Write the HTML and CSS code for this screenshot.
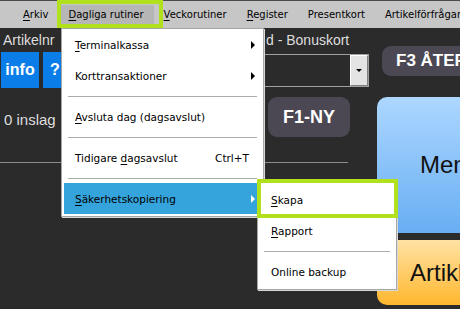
FILE: index.html
```html
<!DOCTYPE html>
<html lang="sv">
<head>
<meta charset="utf-8">
<title>Kassa</title>
<link rel="stylesheet" href="styles.css">
</head>
<body>
<nav class="menubar">
  <span class="mi"><u>A</u>rkiv</span>
  <span class="mi open"><u>D</u>agliga rutiner</span>
  <span class="mi"><u>V</u>eckorutiner</span>
  <span class="mi"><u>R</u>egister</span>
  <span class="mi">Presentkort</span>
  <span class="mi">Artikelförfrågan</span>
</nav>

<main class="main">
  <section class="left">
    <div class="title">Artikelnr</div>
    <div class="title title-b">d - Bonuskort</div>

    <div class="btns">
      <div class="btn-blue info">info</div>
      <div class="btn-blue q">?</div>
    </div>
    <div class="combo"><div class="combo-btn"><span class="tri"></span></div></div>

    <div class="count">0 inslag</div>
    <div class="fcell"><div class="fbtn f1">F1-NY</div></div>

    <div class="rule"></div>
  </section>

  <section class="right">
    <div class="fbtn f3">F3 ÅTERKÖP</div>
    <div class="big big-blue">Meny</div>
    <div class="big big-orange">Artiklar</div>
  </section>
</main>

<div class="dropdown">
  <div class="item"><span class="label"><u>T</u>erminalkassa</span><span class="arrow"></span></div>
  <div class="item"><span class="label">Korttransaktioner</span><span class="arrow"></span></div>
  <div class="sep"></div>
  <div class="item"><span class="label"><u>A</u>vsluta dag (dagsavslut)</span></div>
  <div class="sep"></div>
  <div class="item"><span class="label">Tidigare <u>d</u>agsavslut</span><span class="shortcut">Ctrl+T</span></div>
  <div class="sep"></div>
  <div class="item active"><span class="label"><u>S</u>äkerhetskopiering</span><span class="arrow"></span></div>
</div>

<div class="submenu">
  <div class="item"><span class="label"><u>S</u>kapa</span></div>
  <div class="item"><span class="label"><u>R</u>apport</span></div>
  <div class="sep"></div>
  <div class="item"><span class="label">Online backup</span></div>
</div>

<div class="mark mark-menu"></div>
<div class="mark mark-sub"></div>
</body>
</html>
```

FILE: styles.css
```css
* { box-sizing: border-box; margin: 0; padding: 0; }
html, body { width: 460px; height: 309px; overflow: hidden; }
body {
  background: #2b2b2b;
  font-family: "DejaVu Sans", sans-serif;
  position: relative;
}
u { text-decoration: underline; text-underline-offset: 2px; text-decoration-thickness: 1px; }

/* menu bar */
.menubar {
  height: 28px;
  background: #c6c6c6;
  border-top: 1px solid #4a4a4a;
  display: flex;
  align-items: center;
  padding-left: 13px;
  font-size: 10px;
  color: #000;
  white-space: nowrap;
}
.mi { padding: 4px 10px; }
.mi.open { background: #b6b6b6; }

/* application background */
.main { display: flex; gap: 7px; }
.left {
  width: 370px;
  flex-shrink: 0;
  display: grid;
  grid-template-columns: 263px 107px;
  grid-template-rows: 24px 36px 74px 1px;
}
.title {
  color: #dedede;
  font-family: "Liberation Sans", sans-serif;
  font-size: 14px;
  display: flex;
  align-items: center;
  padding-left: 3px;
}
.btns { display: flex; gap: 4px; padding-left: 1px; }
.btn-blue {
  background: #0b7de8;
  color: #fff;
  font: bold 16px "Liberation Sans", sans-serif;
  height: 36px;
  display: flex;
  align-items: center;
  justify-content: center;
}
.info { width: 38px; }
.q { width: 24px; }
.combo {
  margin-top: 2px;
  height: 33px;
  width: 106px;
  border: 1px solid #a0a0a0;
  display: flex;
  justify-content: flex-end;
}
.combo-btn {
  width: 18px;
  background: #e4e4e4;
  border: 1px solid;
  border-color: #fff #808080 #808080 #fff;
  display: flex;
  align-items: center;
  justify-content: center;
}
.tri {
  width: 0; height: 0;
  border-top: 3px solid #000;
  border-left: 3px solid transparent;
  border-right: 3px solid transparent;
}
.count {
  color: #dedede;
  font-family: "Liberation Sans", sans-serif;
  font-size: 15px;
  padding: 23px 0 0 4px;
}
.fcell { padding: 9px 0 0 5px; }
.fbtn {
  background: #4b4853;
  color: #fff;
  font: bold 18px "Liberation Sans", sans-serif;
  border-radius: 9px;
  display: flex;
  align-items: center;
  white-space: nowrap;
}
.f1 { width: 82px; height: 40px; justify-content: center; }
.rule { grid-column: 1 / -1; width: 348px; height: 1px; background: #8c8c8c; }

.right { width: 160px; flex-shrink: 0; display: flex; flex-direction: column; }
.f3 { margin: 18px 0 0 5px; height: 30px; padding-left: 14px; font-size: 17px; }
.big {
  display: flex;
  align-items: center;
  font-family: "Liberation Sans", sans-serif;
  font-size: 24px;
  color: #111;
  white-space: nowrap;
}
.big-blue {
  margin-top: 21px;
  height: 136px;
  border-radius: 10px 0 0 0;
  background: linear-gradient(#acd7ff, #68aef3);
  padding-left: 43px;
}
.big-orange {
  margin-top: 7px;
  height: 65px;
  border-radius: 0 0 0 10px;
  background: linear-gradient(#ffe2a4, #ffb72e);
  padding-left: 33px;
}

/* menus */
.dropdown, .submenu {
  position: absolute;
  background: #fff;
  border: 1px solid #a6a6a6;
  font-size: 10.5px;
  color: #000;
  white-space: nowrap;
  box-shadow: 1px 1px 0 #d8d8d8;
}
.dropdown { left: 61px; top: 28px; width: 203px; padding: 0 2px 2px; }
.submenu { left: 257px; top: 181px; width: 140px; padding: 2px; }
.item {
  height: 31px;
  display: flex;
  align-items: center;
  padding: 0 6px 0 11px;
}
.label { flex: 1; }
.arrow {
  width: 0; height: 0;
  border-left: 4px solid #000;
  border-top: 4px solid transparent;
  border-bottom: 4px solid transparent;
}
.shortcut { margin-right: 6px; }
.item.active { background: #35a4dc; }
.item.active .arrow { border-left-color: #fff; }
.sep { height: 1px; background: #ababab; margin: 5px 4px 4px; }

/* annotation boxes */
.mark { position: absolute; border: 4px solid #b1e11c; }
.mark-menu { left: 57px; top: 0; width: 106px; height: 28px; }
.mark-sub { left: 257px; top: 179px; width: 141px; height: 39px; }
```
